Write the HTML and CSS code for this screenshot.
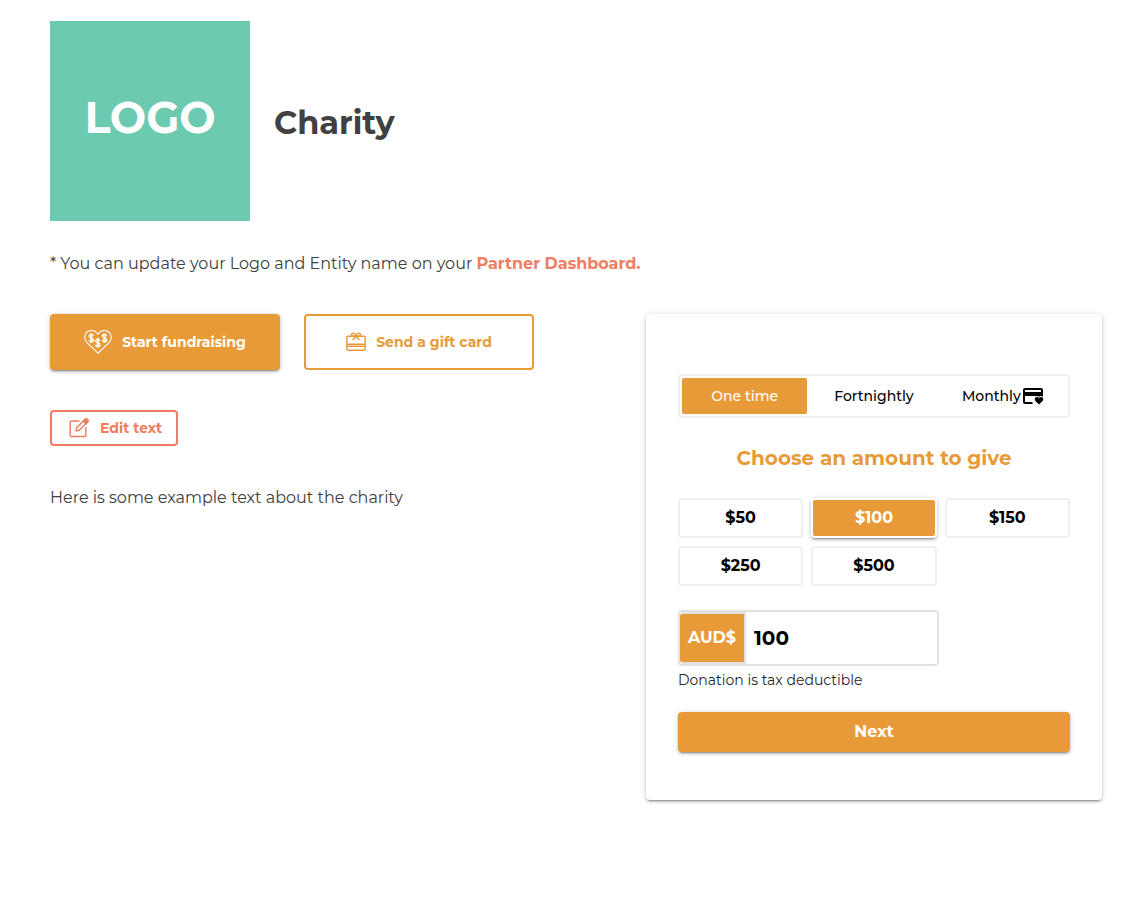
FILE: index.html
```html
<!DOCTYPE html>
<html lang="en">
<head>
<meta charset="utf-8">
<meta name="viewport" content="width=device-width, initial-scale=1">
<title>Charity</title>
<link rel="stylesheet" href="styles.css">
</head>
<body>
<main class="page">
  <header class="brand">
    <div class="logo">LOGO</div>
    <h1 class="brand-name">Charity</h1>
  </header>
  <p class="note">* You can update your Logo and Entity name on your <a class="note-link" href="#dashboard">Partner Dashboard.</a></p>
  <div class="columns">
    <section class="intro">
      <div class="actions">
        <button class="btn btn-solid" type="button">
          <svg class="icon-heart" viewBox="0 0 28 24" fill="none" stroke="currentColor" aria-hidden="true">
            <path d="M14 23.200 2.700 12.500C-.5 8.500.5 3.500 3.800 1.600 7.500-.4 11.500.6 14 4.200 16.500.6 20.500-.4 24.200 1.600 27.500 3.500 28.500 8.500 25.300 12.500Z" stroke-width="1.100"/>
            <g id="dollar" stroke-width="1.100"><path d="M9.600 5.900C9.100 4.100 4.900 4.100 4.900 6.200 4.900 8.500 9.800 7.500 9.800 9.900 9.800 12.100 5.200 12 4.700 10.100M6.600 3.200v9.800M8 3.200v9.800"/></g>
            <use href="#dollar" x="13.200"/>
            <use href="#dollar" x="6.600" y="4.800"/>
          </svg>
          <span>Start fundraising</span>
        </button>
        <button class="btn btn-outline" type="button">
          <svg class="icon-gift" viewBox="0 0 20 20" fill="none" stroke="currentColor" stroke-width="1.400" aria-hidden="true">
            <rect x=".8" y="4.200" width="18.400" height="14" rx="1.500"/>
            <path d="M1 12.300h18M1 14.200h18M10 4.200 6.500 8M10 4.200 13.500 8"/>
            <path d="M10 4.200C9.500 2 8 .9 6.700 1.200 5 1.600 5.200 4.200 7 4.200ZM10 4.200C10.500 2 12 .9 13.300 1.200 15 1.600 14.800 4.200 13 4.200Z"/>
          </svg>
          <span>Send a gift card</span>
        </button>
      </div>
      <button class="edit" type="button">
        <svg class="icon-edit" viewBox="0 0 20 20" fill="none" stroke="currentColor" stroke-width="1.400" stroke-linejoin="round" aria-hidden="true">
          <path d="M10.500 3H2.200Q1.200 3 1.200 4v13.500q0 1 1 1h13.600q1 0 1-1V9"/>
          <path d="M7 12.800 7.600 9.700 15.600 1.700Q17 .4 18.300 1.700T18.300 4.300L10.200 12.300Z"/>
          <path d="M14.300 3 16.300 1.100Q17.500.5 18.500 1.500T18.800 3.700L17 5.700Z" fill="currentColor"/>
        </svg>
        <span>Edit text</span>
      </button>
      <p class="about">Here is some example text about the charity</p>
    </section>
    <form class="card">
      <div class="tabs" role="group" aria-label="Frequency">
        <button class="tab tab-active" type="button" aria-pressed="true">One time</button>
        <button class="tab" type="button" aria-pressed="false">Fortnightly</button>
        <button class="tab" type="button" aria-pressed="false">Monthly
          <svg class="icon-card" viewBox="0 0 24 24" fill="currentColor" aria-hidden="true">
            <path fill-rule="evenodd" d="M4 4h16q2 0 2 2v6.800q-.8-.6-2-.6-1.200 0-2 .8-1-.8-2-.8-1.200 0-2-.2H4v6h7.500v2H4q-2 0-2-2V6q0-2 2-2ZM4 6v2h16V6Z"/>
            <path d="M18 20.500 14.600 17.300Q13.200 15.800 14 14.200 14.600 13 16 13 17.200 13 18 14 18.800 13 20 13 21.400 13 22 14.200 22.800 15.800 21.400 17.300Z" stroke="#fff" stroke-width="1.400" paint-order="stroke"/>
          </svg>
        </button>
      </div>
      <h2 class="card-title">Choose an amount to give</h2>
      <div class="amounts" role="group" aria-label="Amount">
        <button class="amount" type="button">$50</button>
        <button class="amount amount-active" type="button" aria-pressed="true">$100</button>
        <button class="amount" type="button">$150</button>
        <button class="amount" type="button">$250</button>
        <button class="amount" type="button">$500</button>
      </div>
      <div class="field">
        <label class="currency" for="amount">AUD$</label>
        <input class="value" id="amount" type="text" inputmode="decimal" value="100">
      </div>
      <p class="hint">Donation is tax deductible</p>
      <button class="next" type="submit">Next</button>
    </form>
  </div>
</main>
</body>
</html>
```
FILE: styles.css
```css
* { box-sizing: border-box; }
body {
  margin: 0;
  background: #fff;
  color: #404041;
  font-family: Montserrat, Inter, "Open Sans", sans-serif;
  font-size: 16px;
  line-height: 24px;
}
h1, h2, p { margin: 0; }
button, input { font: inherit; color: inherit; margin: 0; }
button { cursor: pointer; padding: 0; border: 0; background: none; }
svg { display: block; flex: none; }

.page { padding: 21px 45px 48px 50px; }
.brand { display: flex; align-items: center; gap: 24px; }
.logo {
  width: 200px;
  height: 200px;
  padding-bottom: 6px;
  display: grid;
  place-items: center;
  background: #6bcab0;
  color: #fff;
  font-size: 43px;
  font-weight: 700;
}
.brand-name { padding-top: 4px; font-size: 32px; line-height: 40px; font-weight: 700; }
.note { margin-top: 31px; }
.note-link { color: #ee7d61; font-weight: 700; text-decoration: none; }

.columns {
  display: grid;
  grid-template-columns: 143fr 114fr;
  gap: 24px;
  align-items: start;
  margin-top: 38px;
}
.actions { display: flex; flex-wrap: wrap; gap: 24px; }
.btn {
  display: flex;
  align-items: center;
  justify-content: center;
  gap: 10px;
  width: 230px;
  height: 56px;
  border-radius: 4px;
  font-size: 14px;
  font-weight: 700;
}
.btn-solid, .amount-active, .next, .card {
  box-shadow: 0 3px 1px -2px rgba(0, 0, 0, .2), 0 2px 2px rgba(0, 0, 0, .14), 0 1px 5px rgba(0, 0, 0, .2);
}
.btn-solid { background: #e99a38; color: #fff; }
.btn-outline { border: 2px solid #e99a38; color: #e99a38; }
.icon-heart { width: 28px; height: 24px; }
.icon-gift, .icon-edit { width: 20px; height: 20px; }
.edit {
  display: flex;
  align-items: center;
  gap: 11px;
  width: 128px;
  height: 36px;
  margin-top: 40px;
  padding-left: 17px;
  border: 2px solid #ee7d61;
  border-radius: 4px;
  color: #ee7d61;
  font-size: 14px;
  font-weight: 700;
}
.about { margin-top: 40px; }

.card {
  padding: 60px 32px 48px;
  border-radius: 4px;
  background: #fff;
  color: #000;
}
.tabs {
  display: grid;
  grid-template-columns: repeat(3, 1fr);
  gap: 4px;
  padding: 2px;
  border: 2px solid #efefef;
  border-radius: 4px;
}
.tab {
  display: flex;
  align-items: center;
  justify-content: center;
  height: 36px;
  border-radius: 2px;
  font-size: 14px;
  font-weight: 500;
}
.tab-active { background: #e99a38; color: #fff; }
.icon-card { width: 24px; height: 24px; }
.card-title {
  margin-top: 28px;
  color: #e99a38;
  font-size: 20px;
  line-height: 24px;
  font-weight: 700;
  text-align: center;
}
.amounts {
  display: grid;
  grid-template-columns: repeat(3, 1fr);
  gap: 8px;
  margin-top: 28px;
}
.amount {
  height: 40px;
  border: 2px solid #efefef;
  border-radius: 4px;
  font-weight: 700;
}
.amount-active {
  border-color: #fff;
  background: #e99a38;
  color: #fff;
}
.field {
  display: flex;
  width: 66.6%;
  height: 56px;
  margin-top: 24px;
  border: 2px solid #e1e1e1;
  border-radius: 4px;
  overflow: hidden;
}
.currency {
  display: grid;
  place-items: center;
  flex: none;
  width: 66px;
  border: solid #e1e1e1;
  border-width: 2px 2px 2px 0;
  border-radius: 4px 0 0 4px;
  background: #e99a38;
  color: #fff;
  font-weight: 700;
}
.value {
  flex: 1;
  min-width: 0;
  padding: 0 8px;
  border: 0;
  background: #fff;
  font-size: 20px;
  font-weight: 700;
}
.hint { margin-top: 2px; color: #262626; font-size: 14px; }
.next {
  width: 100%;
  height: 40px;
  margin-top: 20px;
  border-radius: 4px;
  background: #e99a38;
  color: #fff;
  font-weight: 700;
}
```
